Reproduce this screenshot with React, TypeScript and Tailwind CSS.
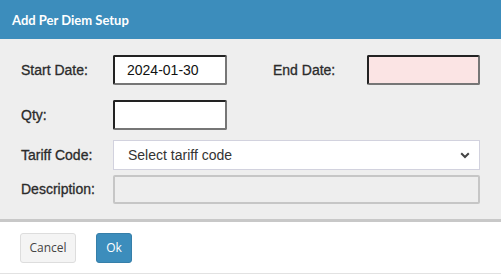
import { useState } from 'react';

function Field({ label, width, children }: { label: string; width: string; children: React.ReactNode }) {
  return (
    <div className="flex items-center">
      <label className={`${width} text-[14px] text-[#2b2b2b] [-webkit-text-stroke:0.3px_#2b2b2b]`}>{label}</label>
      {children}
    </div>
  );
}

export default function App() {
  const [start, setStart] = useState('2024-01-30');
  const [qty, setQty] = useState('');

  const inset =
    'h-[30px] rounded-[2px] border-2 border-t-[#222] border-l-[#222] border-r-[#767676] border-b-[#767676] px-[12px] text-[14px] text-[#111] outline-none';

  return (
    <div className="w-[501px] h-[274px] bg-white font-['Liberation_Sans',Arial,sans-serif]">
      {/* header */}
      <div className="h-[39px] bg-[#3c8dbc] pl-[12px] pt-[3px] flex items-center">
        <h2 className="font-['Lato',sans-serif] font-bold text-[13px] text-white">
          Add Per Diem Setup
        </h2>
      </div>

      {/* body */}
      <div className="h-[183px] bg-[#eeeeee] border-b-[3px] border-[#c8c8c8] pt-[16px] pl-[21px]">
        <div className="flex items-center">
          <Field label="Start Date:" width="w-[92px]">
            <input className={`${inset} w-[114px] bg-white`} value={start} onChange={(e) => setStart(e.target.value)} />
          </Field>
          <div className="ml-[46px]">
            <Field label="End Date:" width="w-[94px]">
              <input className={`${inset} w-[113px] bg-[#fbe4e4]`} />
            </Field>
          </div>
        </div>

        <div className="mt-[15px]">
          <Field label="Qty:" width="w-[92px]">
            <input className={`${inset} w-[114px] bg-white`} value={qty} onChange={(e) => setQty(e.target.value)} />
          </Field>
        </div>

        <div className="mt-[10px]">
          <Field label="Tariff Code:" width="w-[92px]">
            <div className="relative w-[367px] h-[30px]">
              <select className="appearance-none w-full h-full bg-white border border-[#d2d2de] pl-[14px] text-[14px] text-[#333] outline-none">
                <option>Select tariff code</option>
              </select>
              <svg
                className="absolute right-[10px] top-[12px] pointer-events-none"
                width="10"
                height="7"
                viewBox="0 0 10 7"
              >
                <path d="M1.2 1.2 L5 5 L8.8 1.2" fill="none" stroke="#444" strokeWidth="2" />
              </svg>
            </div>
          </Field>
        </div>

        <div className="mt-[5px]">
          <Field label="Description:" width="w-[92px]">
            <input disabled className="w-[367px] h-[29px] rounded-[2px] border-2 border-[#c6c6c6] bg-[#eeeeee]" />
          </Field>
        </div>
      </div>

      {/* footer */}
      <div className="h-[52px] bg-white border-b border-[#e2e2e2] pl-[20px] pt-[11px] flex gap-[20px]">
        <button className="h-[30px] w-[56px] rounded-[3px] border border-[#dddddd] bg-[#f4f4f4] text-[12px] text-[#444] font-['Open_Sans',sans-serif]">
          Cancel
        </button>
        <button className="h-[30px] w-[36px] rounded-[3px] border border-[#367fa9] bg-[#3c8dbc] text-[12px] text-white font-['Open_Sans',sans-serif]">
          Ok
        </button>
      </div>
    </div>
  );
}
